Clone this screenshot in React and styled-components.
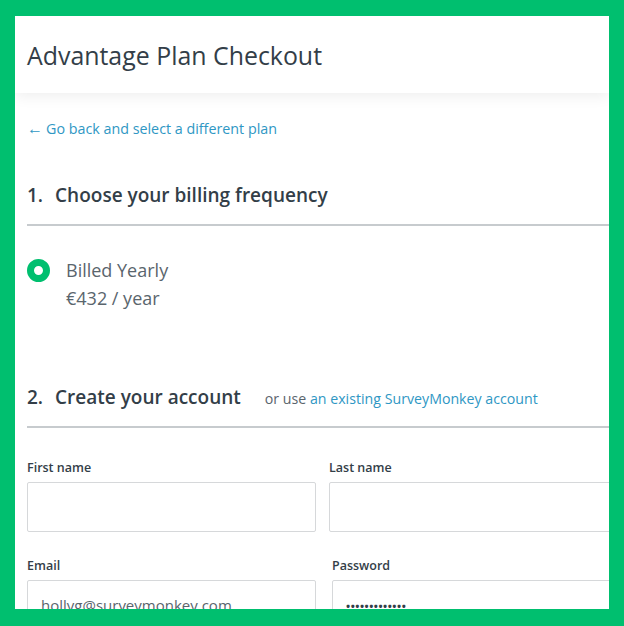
import React from 'react';
import styled, { createGlobalStyle } from 'styled-components';

const GlobalStyle = createGlobalStyle`
  body {
    margin: 0;
    background: #00bf6f;
    font-family: 'Open Sans', 'Liberation Sans', sans-serif;
  }
`;

const Frame = styled.div`
  box-sizing: border-box;
  height: 626px;
  padding: 16px 15px 17px 15px;
  background: #00bf6f;
`;

const Page = styled.div`
  height: 100%;
  background: #fff;
  overflow: hidden;
`;

const Header = styled.header`
  display: flex;
  align-items: center;
  height: 77px;
  padding-left: 12px;
  box-shadow: 0 3px 14px rgba(0, 0, 0, 0.07);
`;

const Title = styled.h1`
  margin: 0;
  font-size: 24.9px;
  font-weight: 400;
  color: #333e48;
`;

const Content = styled.main`
  padding: 25px 0 0 12px;
  width: 640px;
`;

const BackLink = styled.a`
  display: block;
  font-size: 14.3px;
  line-height: 20px;
  color: #2f97c4;
  text-decoration: none;
`;

const Arrow = styled.span`
  font-size: 16px;
  margin-right: 3px;
`;

const Section = styled.section`
  margin-top: ${props => props.$top}px;
`;

const SectionHead = styled.div`
  display: flex;
  align-items: baseline;
  padding-bottom: 17px;
  border-bottom: 2px solid #c7cbce;
`;

const Step = styled.h2`
  margin: 0;
  font-size: 19px;
  line-height: 24px;
  font-weight: 600;
  color: #333e48;
`;

const StepNumber = styled.span`
  margin-right: 12px;
`;

const Aside = styled.span`
  margin-left: 24px;
  font-size: 14.2px;
  color: #5a656d;
`;

const AsideLink = styled.a`
  color: #2f97c4;
  text-decoration: none;
`;

const Option = styled.label`
  display: flex;
  align-items: flex-start;
  gap: 16px;
  margin-top: 30px;
`;

const Radio = styled.span`
  flex: none;
  box-sizing: border-box;
  width: 23px;
  height: 23px;
  margin-top: 3px;
  border-radius: 50%;
  border: 7.5px solid #00bf6f;
  background: #fff;
`;

const OptionText = styled.div`
  font-size: 18px;
  line-height: 28px;
  color: #5a656d;
`;

const Fields = styled.div`
  display: grid;
  grid-template-columns: 289px 289px;
  column-gap: ${props => props.$gap}px;
  margin-top: ${props => props.$top}px;
`;

const Field = styled.div`
  display: flex;
  flex-direction: column;
`;

const Label = styled.label`
  font-size: 12.5px;
  line-height: 18px;
  font-weight: 600;
  color: #333e48;
  margin-bottom: 5px;
`;

const Input = styled.input`
  box-sizing: border-box;
  height: 50px;
  padding: 0 13px;
  border: 1px solid #d6d8da;
  border-radius: 2px;
  font-family: inherit;
  font-size: 15px;
  color: #5a656d;
  outline: none;
`;

const DotsInput = styled(Input)`
  letter-spacing: 0.5px;
  font-size: 11px;
  font-weight: 700;
  color: #333e48;
`;

export default function App() {
  return (
    <>
      <GlobalStyle />
      <Frame>
        <Page>
          <Header>
            <Title>Advantage Plan Checkout</Title>
          </Header>
          <Content>
            <BackLink href="#">
              <Arrow>←</Arrow>Go back and select a different plan
            </BackLink>

            <Section $top={44}>
              <SectionHead>
                <Step>
                  <StepNumber>1.</StepNumber>Choose your billing frequency
                </Step>
              </SectionHead>
              <Option>
                <Radio />
                <OptionText>
                  Billed Yearly
                  <br />
                  €432 / year
                </OptionText>
              </Option>
            </Section>

            <Section $top={73}>
              <SectionHead>
                <Step>
                  <StepNumber>2.</StepNumber>Create your account
                </Step>
                <Aside>
                  or use <AsideLink href="#">an existing SurveyMonkey account</AsideLink>
                </Aside>
              </SectionHead>
              <Fields $top={31} $gap={13}>
                <Field>
                  <Label>First name</Label>
                  <Input />
                </Field>
                <Field>
                  <Label>Last name</Label>
                  <Input />
                </Field>
              </Fields>
              <Fields $top={25} $gap={16}>
                <Field>
                  <Label>Email</Label>
                  <Input readOnly value="hollyg@surveymonkey.com" />
                </Field>
                <Field>
                  <Label>Password</Label>
                  <DotsInput readOnly value="•••••••••••••" />
                </Field>
              </Fields>
            </Section>
          </Content>
        </Page>
      </Frame>
    </>
  );
}
